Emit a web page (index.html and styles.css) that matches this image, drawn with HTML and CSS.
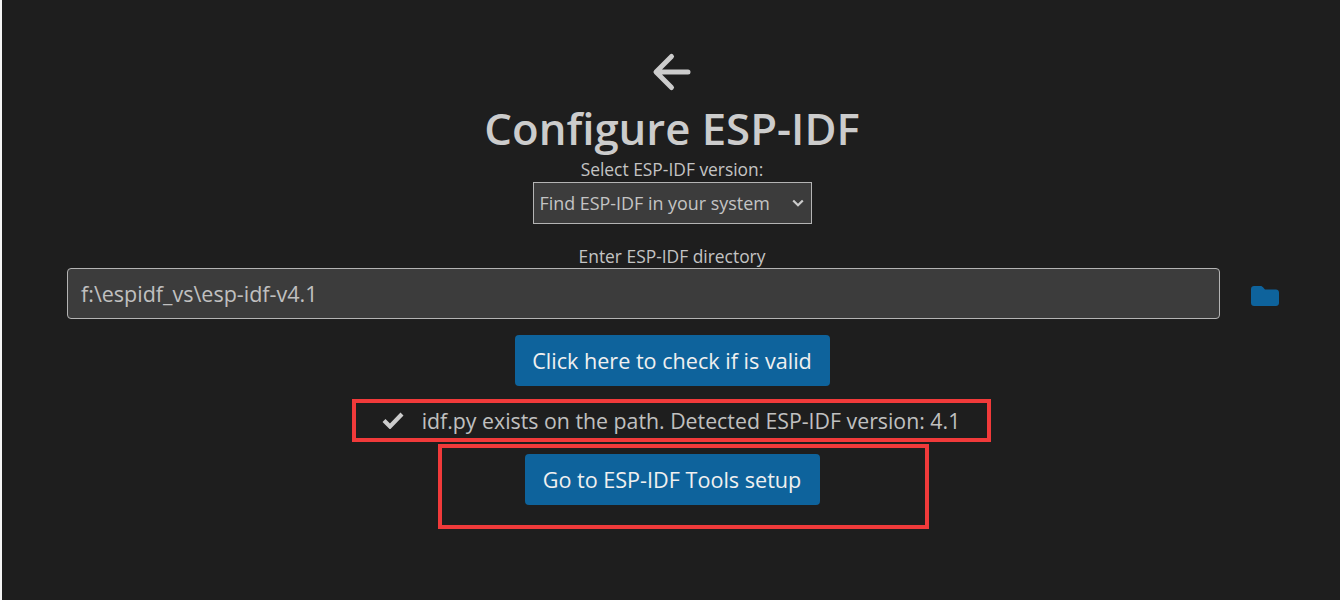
FILE: index.html
```html
<!DOCTYPE html>
<html lang="en">
<head>
  <meta charset="UTF-8" />
  <title>Configure ESP-IDF</title>
  <link rel="stylesheet" href="styles.css">
</head>
<body>
  <main class="page">
    <svg class="back" viewBox="0 0 40 40" width="40" height="40" aria-hidden="true">
      <path d="M37 20H6M20.500 4.500L5 20l15.500 15.500" fill="none" stroke="#cccccc" stroke-width="5" stroke-linecap="round" stroke-linejoin="round"/>
    </svg>
    <h1>Configure ESP-IDF</h1>

    <label class="small-label">Select ESP-IDF version:</label>
    <div class="select">
      <span>Find ESP-IDF in your system</span>
      <svg viewBox="0 0 12 8" width="12" height="8" aria-hidden="true">
        <path d="M1.200 1.500L6 6.300l4.800-4.800" fill="none" stroke="#cccccc" stroke-width="2.200"/>
      </svg>
    </div>

    <label class="small-label dir-label">Enter ESP-IDF directory</label>
    <div class="dir-row">
      <div class="input">f:\espidf_vs\esp-idf-v4.1</div>
      <svg class="folder" viewBox="0 0 28 20" width="28" height="20" aria-hidden="true">
        <path d="M3 0h6.500c1 0 1.600.4 2.300 1.100L14 3.500h11c1.600 0 3 1.300 3 3V17c0 1.700-1.400 3-3 3H3c-1.600 0-3-1.300-3-3V3c0-1.700 1.400-3 3-3z" fill="#0e639c"/>
      </svg>
    </div>

    <button class="btn check-btn">Click here to check if is valid</button>

    <div class="message">
      <svg viewBox="0 0 24 18" width="24" height="18" aria-hidden="true">
        <path d="M3 9.500l6 6L21 3" fill="none" stroke="#cccccc" stroke-width="4.200"/>
      </svg>
      <span>idf.py exists on the path. Detected ESP-IDF version: 4.1</span>
    </div>

    <button class="btn tools-btn">Go to ESP-IDF Tools setup</button>
  </main>

  <div class="mark mark-message"></div>
  <div class="mark mark-button"></div>
</body>
</html>
```

FILE: styles.css
```css
html, body {
  height: 100%;
}

body {
  margin: 0;
  background: #1e1e1e;
  border-left: 2px solid #f4f4f4;
  box-sizing: border-box;
  color: #cccccc;
  font-family: "Open Sans", "Noto Sans", sans-serif;
  overflow: hidden;
  position: relative;
}

.page {
  display: flex;
  flex-direction: column;
  align-items: center;
  padding: 52px 0 0 2px;
}

.back {
  display: block;
  margin-right: 2px;
}

h1 {
  margin: 8px 0 0;
  font-size: 43.700px;
  line-height: 56px;
  font-weight: 600;
}

.small-label {
  font-size: 17.400px;
  line-height: 20px;
  margin-top: 3px;
  color: #c4c4c4;
}

.select {
  box-sizing: border-box;
  width: 279px;
  height: 42px;
  margin-top: 3px;
  padding: 0 6px;
  display: flex;
  align-items: center;
  justify-content: space-between;
  background: #3c3c3c;
  border: 1px solid #b4b4b4;
  font-size: 17.900px;
  color: #c4c4c4;
  white-space: nowrap;
}

.select svg {
  margin-right: 1px;
}

.dir-label {
  margin-top: 22px;
}

.dir-row {
  align-self: stretch;
  display: flex;
  align-items: center;
  margin: 2px 0 0 63px;
}

.input {
  box-sizing: border-box;
  width: 1153px;
  height: 51px;
  padding: 0 13px;
  display: flex;
  align-items: center;
  background: #3c3c3c;
  border: 1px solid #b4b4b4;
  border-radius: 4px;
  font-size: 21.500px;
  color: #c0c0c0;
}

.folder {
  margin-left: 31px;
  margin-top: 4px;
}

.btn {
  display: block;
  height: 51px;
  border: none;
  border-radius: 4px;
  background: #0e639c;
  color: #f0f0f0;
  font-family: inherit;
  font-size: 21.600px;
  padding: 0;
  white-space: nowrap;
}

.check-btn {
  width: 315px;
  margin-top: 16px;
}

.message {
  display: flex;
  align-items: center;
  gap: 17px;
  height: 30px;
  margin: 19px 3px 0 0;
  font-size: 21.300px;
  color: #c0c0c0;
  white-space: nowrap;
}

.tools-btn {
  width: 295px;
  margin-top: 19px;
}

/* red annotation boxes drawn over the screenshot */
.mark {
  position: absolute;
  box-sizing: border-box;
  border: 4px solid #f13a3a;
}

.mark-message {
  left: 350px;
  top: 399px;
  width: 639px;
  height: 43px;
}

.mark-button {
  left: 436px;
  top: 444px;
  width: 491px;
  height: 85px;
}
```
